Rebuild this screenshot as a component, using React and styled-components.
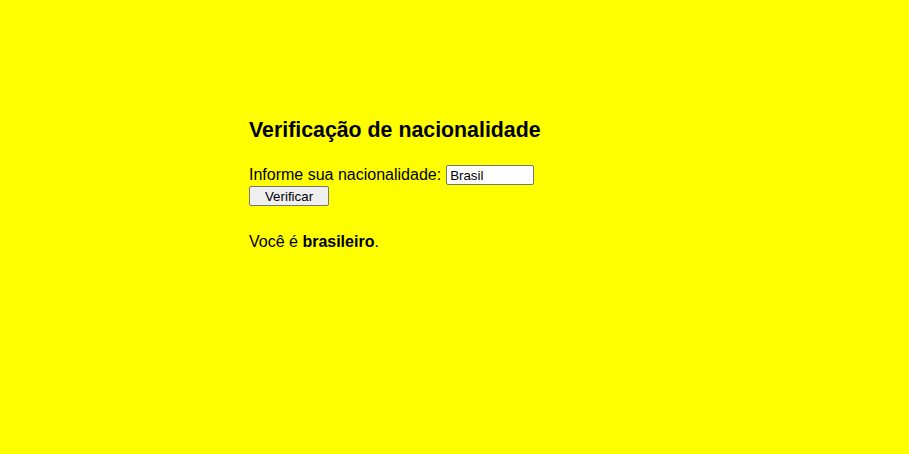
import React, { useState } from "react";
import styled, { createGlobalStyle } from "styled-components";

const GlobalStyle = createGlobalStyle`
  html, body {
    margin: 0;
    background: #ffff00;
  }
  body {
    font-family: "Liberation Sans", Arial, sans-serif;
    color: #000;
  }
`;

const Page = styled.div`
  min-height: 454px;
  padding: 118px 0 0 249px;
  box-sizing: border-box;
`;

const Title = styled.h2`
  font-size: 21.33px;
  line-height: 24px;
  font-weight: bold;
  margin: 0 0 22px;
`;

const Form = styled.form`
  display: flex;
  flex-direction: column;
  align-items: flex-start;
  gap: 1px;
  font-size: 16px;
`;

const Field = styled.div`
  line-height: 18px;
  height: 20px;
  padding-top: 1px;
`;

const Input = styled.input`
  font-family: "Liberation Sans", Arial, sans-serif;
  font-size: 13.33px;
  width: 88px;
  height: 20px;
  box-sizing: border-box;
  border: 1px solid #767676;
  border-radius: 2px;
  padding: 1px 3px;
  background: #fff;
  margin-left: 5px;
`;

const Button = styled.button`
  font-family: "Liberation Sans", Arial, sans-serif;
  font-size: 13.33px;
  width: 80px;
  height: 20px;
  box-sizing: border-box;
  border: 1px solid #767676;
  border-radius: 2px;
  background: #efefef;
  color: #000;
  padding: 0;
`;

const Result = styled.p`
  font-size: 16px;
  line-height: 18px;
  margin: 27px 0 0;
`;

export default function App() {
  const [pais, setPais] = useState("Brasil");
  return (
    <>
      <GlobalStyle />
      <Page>
        <Title>Verificação de nacionalidade</Title>
        <Form onSubmit={(e) => e.preventDefault()}>
          <Field>
            Informe sua nacionalidade:
            <Input value={pais} onChange={(e) => setPais(e.target.value)} />
          </Field>
          <Button type="submit">Verificar</Button>
        </Form>
        <Result>
          Você é <b>brasileiro</b>.
        </Result>
      </Page>
    </>
  );
}
